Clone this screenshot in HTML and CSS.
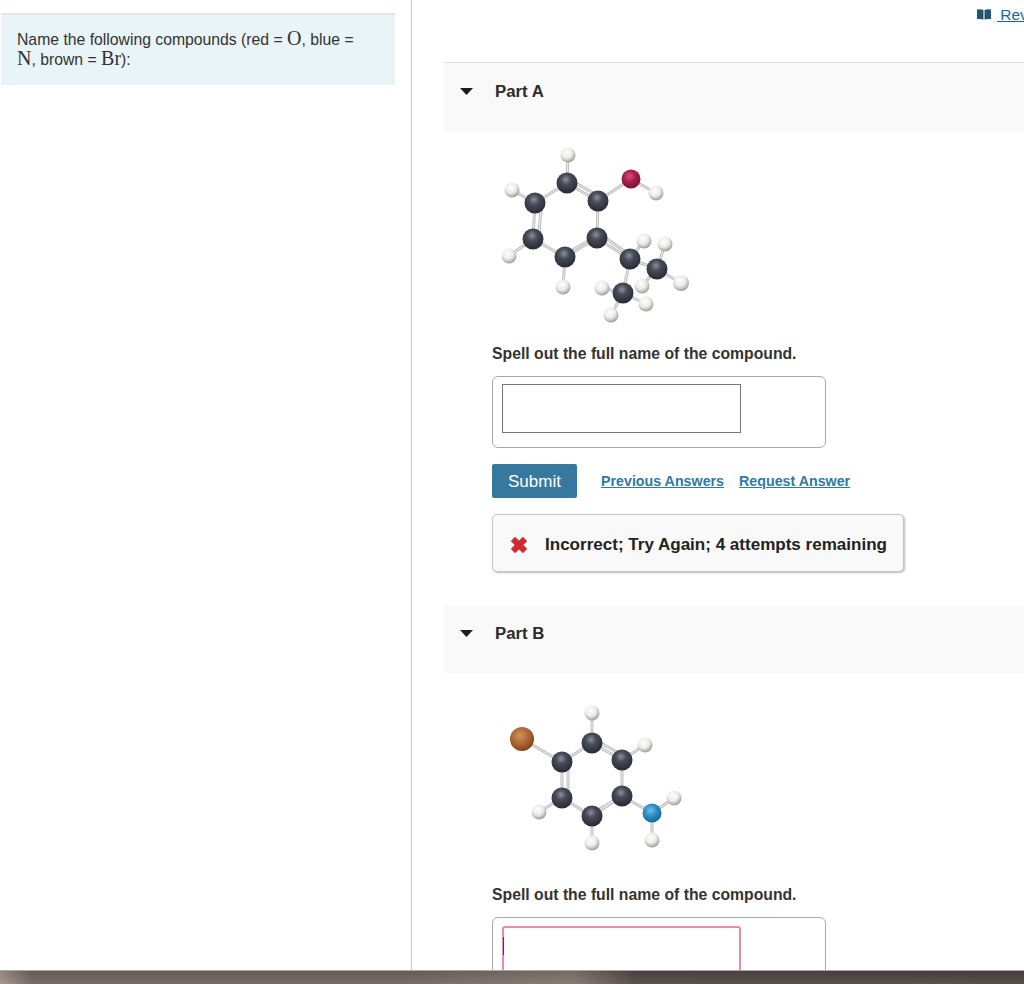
FILE: index.html
```html
<!DOCTYPE html>
<html lang="en">
<head>
<meta charset="utf-8">
<title>Name the following compounds</title>
<link rel="stylesheet" href="styles.css">
</head>
<body>
<svg class="defs" width="0" height="0" aria-hidden="true">
  <defs>
    <radialGradient id="gc" cx="0.45" cy="0.34" r="0.66"><stop offset="0" stop-color="#8a8f9c"/><stop offset="0.38" stop-color="#474b58"/><stop offset="1" stop-color="#282a33"/></radialGradient>
    <radialGradient id="gh" cx="0.42" cy="0.34" r="0.72"><stop offset="0" stop-color="#ffffff"/><stop offset="0.5" stop-color="#ebebe9"/><stop offset="1" stop-color="#8f8f88"/></radialGradient>
    <radialGradient id="go" cx="0.42" cy="0.36" r="0.62"><stop offset="0" stop-color="#d9507a"/><stop offset="0.5" stop-color="#a91f4d"/><stop offset="1" stop-color="#7c1236"/></radialGradient>
    <radialGradient id="gbr" cx="0.42" cy="0.36" r="0.66"><stop offset="0" stop-color="#d2925c"/><stop offset="0.55" stop-color="#ad6433"/><stop offset="1" stop-color="#7d4420"/></radialGradient>
    <radialGradient id="gn" cx="0.42" cy="0.36" r="0.62"><stop offset="0" stop-color="#6cc0e6"/><stop offset="0.5" stop-color="#2d91c4"/><stop offset="1" stop-color="#1b6a98"/></radialGradient>
    <filter id="soft" x="-5%" y="-5%" width="110%" height="110%"><feGaussianBlur stdDeviation="0.7"/></filter>
    <path id="bonds-a" d="M568 155L567 183M567 183L535 203M535 203L512 190M535 203L533 239M533 239L509 256M533 239L565 257M565 257L563 287M565 257L597 238M597 238L598 201M598 201L567 183M598 201L631 179M631 179L656 193M597 238L630 259M630 259L644 241M630 259L657 269M657 269L665 244M657 269L681 283M657 269L642 286M630 259L623 293M623 293L602 288M623 293L646 304M623 293L611 315M541 209L539 233M571 251L593 238M569 179L600 197M597 232L630 255"/>
    <path id="bonds-b" d="M522 739L562 762M562 762L592 743M592 743L592 713M592 743L622 760M622 760L645 745M622 760L622 796M622 796L652 813M652 813L674 798M652 813L652 840M622 796L592 816M592 816L592 843M592 816L562 798M562 798L539 812M562 798L562 762M568 767L568 793M592 738L624 756M596 811L622 796"/>
  </defs>
</svg>
<div class="app">
  <aside class="sidebar">
    <div class="prompt">
      <p class="prompt-text">Name the following compounds (red = <span class="math">O</span>, blue = <span class="math">N</span>, brown = <span class="math">Br</span>):</p>
    </div>
  </aside>
  <main class="main">
    <div class="toolbar">
      <a class="review" href="#">
        <svg class="book" viewBox="0 0 14 11" width="14" height="11"><path d="M0 .5q3.300-.6 6.500.4v9.600q-3.200-1-6.500-.4zM14 .5q-3.300-.6-6.500.4v9.600q3.200-1 6.500-.4z" fill="#24566f"/></svg>
        <span class="review-text">&nbsp;Review</span>
      </a>
    </div>

    <section class="part part-a">
      <header class="part-head">
        <svg class="caret" viewBox="0 0 13 7" width="13" height="7"><path d="M0 0h13L6.500 7z" fill="#1c1c1c"/></svg>
        <h2 class="part-title">Part A</h2>
      </header>
      <div class="figure figure-a">
        <svg viewBox="490 140 210 190" width="210" height="190" role="img" aria-label="Ball and stick model, part A">
          <g filter="url(#soft)">
            <use href="#bonds-a" class="bond"/>
            <use href="#bonds-a" class="bond-hi"/>
            <g fill="url(#gh)">
              <circle cx="568" cy="155" r="7.500"/><circle cx="512" cy="190" r="7.500"/><circle cx="509" cy="256" r="7.500"/><circle cx="563" cy="287" r="7.500"/><circle cx="644" cy="241" r="7.500"/><circle cx="665" cy="244" r="7.500"/><circle cx="642" cy="286" r="7.500"/><circle cx="681" cy="283" r="8"/><circle cx="656" cy="193" r="7.500"/><circle cx="602" cy="288" r="7.500"/><circle cx="646" cy="304" r="7.500"/><circle cx="611" cy="315" r="7.500"/>
            </g>
            <g fill="url(#gc)">
              <circle cx="567" cy="183" r="10.500"/><circle cx="598" cy="201" r="10.500"/><circle cx="535" cy="203" r="10.500"/><circle cx="533" cy="239" r="10.500"/><circle cx="565" cy="257" r="10.500"/><circle cx="597" cy="238" r="10.500"/><circle cx="630" cy="259" r="10.500"/><circle cx="657" cy="269" r="10.500"/><circle cx="623" cy="293" r="10.500"/>
            </g>
            <circle cx="631" cy="179" r="9.500" fill="url(#go)"/>
          </g>
        </svg>
      </div>
      <p class="question">Spell out the full name of the compound.</p>
      <div class="answer-box"><input class="answer" type="text" aria-label="Answer"></div>
      <div class="actions">
        <button class="submit" type="button">Submit</button>
        <a class="action-link" href="#">Previous Answers</a>
        <a class="action-link" href="#">Request Answer</a>
      </div>
      <div class="feedback">
        <svg class="cross" viewBox="1.500 1.500 13 13" width="16" height="16"><path d="M2 4.800L4.800 2 8 5.200 11.200 2 14 4.800 10.800 8 14 11.200 11.200 14 8 10.800 4.800 14 2 11.200 5.200 8z" fill="#cf2a30" stroke="#cf2a30" stroke-linejoin="round"/></svg>
        <span>Incorrect; Try Again; 4 attempts remaining</span>
      </div>
    </section>

    <section class="part part-b">
      <header class="part-head part-head-b">
        <svg class="caret" viewBox="0 0 13 7" width="13" height="7"><path d="M0 0h13L6.500 7z" fill="#1c1c1c"/></svg>
        <h2 class="part-title">Part B</h2>
      </header>
      <div class="figure figure-b">
        <svg viewBox="490 695 210 165" width="210" height="165" role="img" aria-label="Ball and stick model, part B">
          <g filter="url(#soft)">
            <use href="#bonds-b" class="bond"/>
            <use href="#bonds-b" class="bond-hi"/>
            <g fill="url(#gh)">
              <circle cx="592" cy="713" r="7.500"/><circle cx="645" cy="745" r="7.500"/><circle cx="674" cy="798" r="7.500"/><circle cx="652" cy="840" r="7.500"/><circle cx="592" cy="843" r="7.500"/><circle cx="539" cy="812" r="7.500"/>
            </g>
            <g fill="url(#gc)">
              <circle cx="562" cy="762" r="10.500"/><circle cx="592" cy="743" r="10.500"/><circle cx="622" cy="760" r="10.500"/><circle cx="622" cy="796" r="10.500"/><circle cx="592" cy="816" r="10.500"/><circle cx="562" cy="798" r="10.500"/>
            </g>
            <circle cx="522" cy="739" r="12" fill="url(#gbr)"/>
            <circle cx="652" cy="813" r="9.500" fill="url(#gn)"/>
          </g>
        </svg>
      </div>
      <p class="question">Spell out the full name of the compound.</p>
      <div class="answer-box answer-box-b"><div class="answer answer-focus"><span class="cursor"></span></div></div>
    </section>
  </main>
</div>
<div class="taskbar"></div>
</body>
</html>
```
FILE: styles.css
```css
* { box-sizing: border-box; }
html, body { margin: 0; padding: 0; height: 984px; overflow: hidden; background: #fff; }
body { font-family: "Liberation Sans", Arial, sans-serif; color: #2b2b2b; position: relative; }
.defs { display: block; height: 0; }
.app { display: flex; height: 984px; }
.sidebar { flex: 0 0 412px; border-right: 1px solid #c3c9d6; padding: 13px 16px 0 1px; }
.prompt { height: 72px; background: #e8f4f7; border-top: 2px solid #e4e5ea; padding: 15px 32px 0 16px; }
.prompt-text { margin: 0; font-size: 15.750px; line-height: 20px; color: #333; }
.math { font-family: "Liberation Serif", serif; font-size: 20px; line-height: 0; }
.main { flex: 1; min-width: 0; overflow: hidden; padding-left: 32px; }
.toolbar { height: 62px; padding: 4px 0 0 533px; white-space: nowrap; }
.review { display: inline-flex; align-items: center; gap: 6px; color: #1b6a8e; font-size: 15.500px; line-height: 22px; text-decoration: none; }
.review-text { text-decoration: underline; word-spacing: -1px; }
.book { display: block; flex: none; margin-top: -1px; }
.part-head { display: flex; align-items: flex-start; width: 600px; height: 70px; background: #f9f9f9; border-top: 1px solid #e2e2e2; padding: 19px 0 0 16px; gap: 22px; }
.part-head-b { height: 68px; border-top: 0; padding-top: 19px; }
.caret { margin-top: 6px; flex: none; }
.part-title { margin: 0; font-size: 16.800px; line-height: 20px; font-weight: 700; color: #2b2b2b; }
.figure { margin-left: 46px; }
.figure svg { display: block; }
.figure-a { padding-top: 8px; height: 213px; }
.figure-b { padding-top: 22px; height: 212px; }
.bond, .bond-hi { fill: none; }
.bond { stroke: #bcbdbf; stroke-width: 3; }
.bond-hi { stroke: #eeeeef; stroke-width: 1; }
.question { margin: 0 0 0 48px; font-size: 15.750px; line-height: 18px; font-weight: 700; color: #333; height: 31px; }
.part-b .question { height: 31px; margin-top: 1px; }
.answer-box { margin-left: 48px; width: 334px; height: 72px; background: #fff; border: 1px solid #a9a9a9; border-radius: 6px; padding: 7px 0 0 9px; }
.answer-box-b { padding-top: 8px; }
.answer { display: block; width: 239px; height: 49px; border: 1px solid #767676; border-radius: 0; background: #fff; padding: 0; margin: 0; outline: none; }
.answer-focus { height: 60px; border: 2px solid #e98ab4; border-radius: 3px; }
.cursor { display: block; width: 1px; height: 18px; margin: 9px 0 0 -1px; background: #8a1a50; }
.actions { display: flex; align-items: center; margin: 16px 0 0 48px; height: 34px; }
.submit { width: 85px; height: 34px; background: #37799e; color: #fff; border: 0; border-radius: 2px; font: 400 17px "Liberation Sans", Arial, sans-serif; padding: 2px 0 0; margin-right: 24px; }
.action-link { color: #2f7aa3; font-size: 14.250px; font-weight: 700; margin-right: 15px; text-decoration: underline; }
.feedback { display: flex; align-items: center; gap: 18px; margin: 16px 0 0 48px; width: 412px; height: 58px; background: #f9f9f9; border: 1px solid #c4c4c4; border-radius: 5px; box-shadow: 1px 1px 2px #bdbdbd; padding: 3px 0 0 18px; font-size: 17.050px; font-weight: 700; color: #222; white-space: nowrap; }
.cross { flex: none; }
.part-b { margin-top: 33px; }
.taskbar { position: absolute; left: 0; right: 0; top: 970px; height: 14px; border-top: 1px solid #a6a6a6; background: linear-gradient(180deg, rgba(0,0,0,.1), rgba(255,255,255,.05)), linear-gradient(90deg, #a3958f 0, #726561 3%, #726561 40%, #82766f 56%, #524946 62%, #4e4543 100%); }
```
